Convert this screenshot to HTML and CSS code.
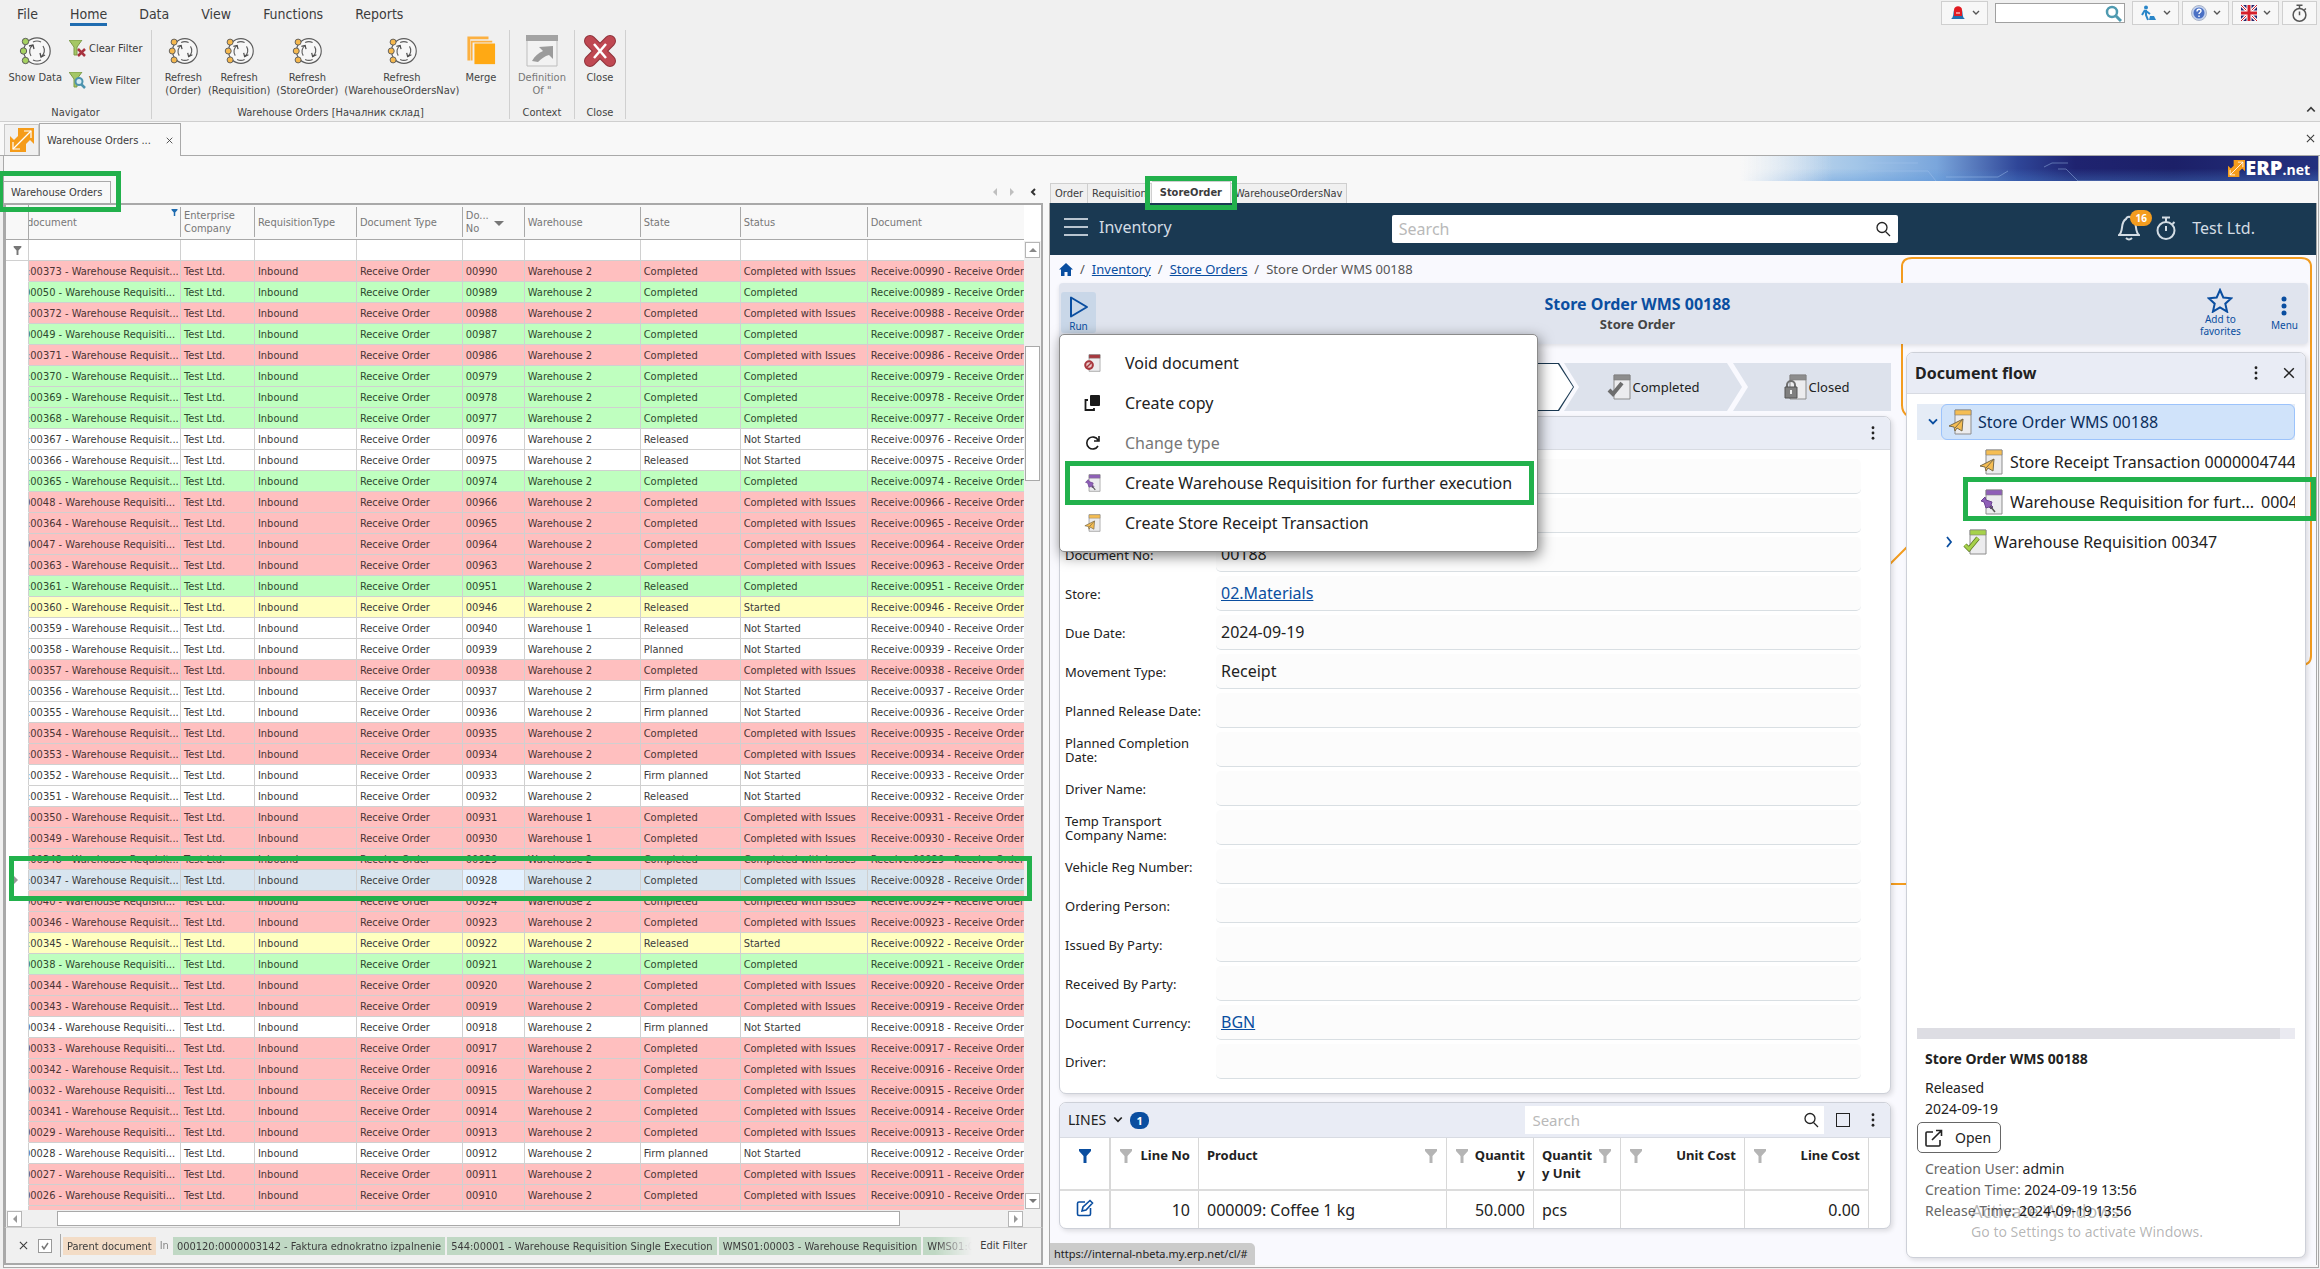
FILE: index.html
```html
<!DOCTYPE html>
<html lang="en">
<head>
<meta charset="utf-8">
<title>Warehouse Orders</title>
<link rel="stylesheet" href="styles.css">
</head>
<body>
<svg class="sprite" aria-hidden="true">
  <symbol id="refresh" viewBox="0 0 32 32">
    <circle cx="18" cy="16" r="13.2" fill="#f7f7f7" stroke="#5c5c5c" stroke-width="1.2"/>
    <path d="M12 21a8 8 0 0 1 2-11M24 11a8 8 0 0 1-2 11M14 25q4 2 8 0M14 7q4-2 8 0" fill="none" stroke="#5c5c5c" stroke-width="1.2"/>
    <path d="M10 11l4-1 1 4M26 20l-4 2-1-4" fill="none" stroke="#4c4c4c" stroke-width="1.3"/>
    <g fill="currentColor" stroke="#5c5c5c"><circle cx="6.500" cy="6.500" r="3.2"/><circle cx="4.500" cy="16" r="3.2"/><circle cx="6.500" cy="25.500" r="3.2"/></g>
  </symbol>
  <symbol id="funnel" viewBox="0 0 12 14"><path d="M0 0h12v2L7.500 7v7h-3V7L0 2z" fill="currentColor"/></symbol>
  <symbol id="caret" viewBox="0 0 8 6"><path d="M1 1l3 3 3-3" fill="none" stroke="currentColor" stroke-width="1.4"/></symbol>
  <symbol id="cross" viewBox="0 0 10 10"><path d="M1 1l8 8M9 1l-8 8" fill="none" stroke="currentColor" stroke-width="1.2"/></symbol>
  <symbol id="lens" viewBox="0 0 16 16"><circle cx="7" cy="6.500" r="5" fill="none" stroke="currentColor" stroke-width="1.3"/><path d="M10.500 10.500L15 15" stroke="currentColor" stroke-width="1.3"/></symbol>
  <symbol id="dots" viewBox="0 0 4 16"><g fill="currentColor"><circle cx="2" cy="2" r="1.6"/><circle cx="2" cy="8" r="1.6"/><circle cx="2" cy="14" r="1.6"/></g></symbol>
  <symbol id="stopwatch" viewBox="0 0 22 24"><g fill="none" stroke="currentColor" stroke-width="2"><circle cx="11" cy="14.500" r="8.500"/><path d="M7 1.500h8M11 2v4M17.500 8l2-2M11 10v5"/></g></symbol>
  <symbol id="arrows" viewBox="0 0 24 24"><path d="M8 0h16v16l-4-4-4 4v8H0V8l4 4 4-4z" fill="#f59c1a"/><path d="M3 21L21 3" stroke="#fff" stroke-width="1.200"/><path d="M14 3h7v7M3 14v7h7" fill="none" stroke="#fff" stroke-width="1.200"/></symbol>
  <symbol id="sheet" viewBox="0 0 24 26"><path d="M7 1h16v24H7z" fill="#ececee" stroke="#8d8d8d"/><path d="M7 1h16v5H7z" fill="currentColor" stroke="#7d7d7d" stroke-opacity=".6"/></symbol>
  <symbol id="doc-plane" viewBox="0 0 24 26"><use href="#sheet"/><path d="M1 17L15 10l-1 12-5-3-2 3-1-4z" fill="#f5bd52" stroke="#7a6a48"/><path d="M15 10l-8 9" stroke="#7a6a48"/></symbol>
  <symbol id="doc-pin" viewBox="0 0 24 26"><use href="#sheet"/><path d="M2 12l4-4 1 3 6 2-1 3 2 2-2 2-2-2-3 1-2-6z" fill="#8f5fb8" stroke="#6b4391"/><path d="M11 17l5 6" stroke="#555" stroke-width="1.500"/></symbol>
  <symbol id="doc-check" viewBox="0 0 24 26"><use href="#sheet"/><path d="M2 16l4 4 9-11" fill="none" stroke="#5d7626" stroke-width="4.500"/><path d="M2 16l4 4 9-11" fill="none" stroke="#a6d14b" stroke-width="3"/></symbol>
  <symbol id="doc-done" viewBox="0 0 24 26"><use href="#sheet"/><path d="M2 16l4 4 9-11" fill="none" stroke="#6d6d6d" stroke-width="4"/></symbol>
  <symbol id="doc-lock" viewBox="0 0 24 26"><use href="#sheet"/><path d="M4 14v-3a4 4 0 0 1 8 0v3" fill="none" stroke="#6f6f6f" stroke-width="2"/><path d="M2 13h12v11H2z" fill="#7f7f7f" stroke="#555"/><path d="M8 16v4" stroke="#eee" stroke-width="2"/></symbol>
  <symbol id="doc-void" viewBox="0 0 24 26"><use href="#sheet"/><circle cx="7" cy="16" r="5.500" fill="#e9c9c9" stroke="#a8373d" stroke-width="3"/><path d="M3 20l8-8" stroke="#a8373d" stroke-width="2"/></symbol>
</svg>

<header class="ribbon">
  <div class="ribbon-top">
    <nav class="ribbon-tabs">
      <button>File</button><button class="is-active">Home</button><button>Data</button><button>View</button><button>Functions</button><button>Reports</button>
    </nav>
    <div class="quick">
      <button class="quick-btn" aria-label="Alerts"><svg width="16" height="16" viewBox="0 0 16 16"><path d="M1 14c3-2 2-6 3-9h8c1 3 0 7 3 9z" fill="#1f6fb0"/><path d="M4 11V5c0-5 8-5 8 0v6z" fill="#e11b22"/><path d="M6 8h4" stroke="#fff"/></svg><svg width="8" height="6"><use href="#caret"/></svg></button>
      <label class="quick-search"><input type="text" aria-label="Quick search"><svg width="17" height="17" viewBox="0 0 17 17"><circle cx="7" cy="7" r="5" fill="none" stroke="#4f9ab0" stroke-width="2.500"/><path d="M11 11l5 5" stroke="#4f9ab0" stroke-width="3"/></svg></label>
      <button class="quick-btn" aria-label="Tasks"><svg width="16" height="16" viewBox="0 0 16 16"><circle cx="5" cy="2.500" r="2" fill="#2a86c8"/><path d="M4 5l-3 5M5 5v5l2 5M5 6l4 3" stroke="#2a86c8" stroke-width="2" fill="none"/><path d="M8 15l1-4 4 0 2 4z" fill="#2a86c8"/></svg><svg width="8" height="6"><use href="#caret"/></svg></button>
      <button class="quick-btn" aria-label="Help"><svg width="16" height="16" viewBox="0 0 16 16"><circle cx="8" cy="8" r="7.500" fill="#c3d2ee" stroke="#aab4c8"/><circle cx="8" cy="8" r="5.500" fill="#4a70c4"/><path d="M6 6.500c0-3 4-3 4-.5 0 1.500-2 1.500-2 3M8 10.500v1.500" fill="none" stroke="#fff" stroke-width="1.400"/></svg><svg width="8" height="6"><use href="#caret"/></svg></button>
      <button class="quick-btn" aria-label="Language"><svg width="16" height="16" viewBox="0 0 16 16"><path d="M0 0h16v16H0z" fill="#26246b"/><path d="M0 0l16 16M16 0L0 16" stroke="#fff" stroke-width="3"/><path d="M0 0l16 16M16 0L0 16" stroke="#d6202b"/><path d="M8 0v16M0 8h16" stroke="#fff" stroke-width="5"/><path d="M8 0v16M0 8h16" stroke="#d6202b" stroke-width="3"/></svg><svg width="8" height="6"><use href="#caret"/></svg></button>
      <button class="quick-btn" aria-label="Timer"><svg width="17" height="18"><use href="#stopwatch"/></svg></button>
    </div>
  </div>
  <div class="ribbon-body">
    <section class="group group-nav">
      <div class="group-items">
        <button class="tool green"><svg width="32" height="32"><use href="#refresh"/></svg>Show Data</button>
        <div class="mini-tools">
          <button class="mini"><svg width="17" height="17" viewBox="0 0 17 17"><path d="M0 0h13L8 7v8l-3 0V7z" fill="#a5c765" stroke="#7c9a49"/><path d="M9 9l7 7M16 9l-7 7" stroke="#a8323e" stroke-width="2.500"/></svg>Clear Filter</button>
          <button class="mini"><svg width="17" height="17" viewBox="0 0 17 17"><path d="M0 0h13L8 7v8l-3 0V7z" fill="#a5c765" stroke="#7c9a49"/><circle cx="10" cy="9.500" r="3.500" fill="#d7ecf5" stroke="#4c93ae" stroke-width="2"/><path d="M12 12l4 4" stroke="#4c93ae" stroke-width="2.500"/></svg>View Filter</button>
        </div>
      </div>
      <h2>Navigator</h2>
    </section>
    <section class="group group-orders">
      <div class="group-items">
        <button class="tool"><svg width="30" height="32"><use href="#refresh"/></svg>Refresh<br>(Order)</button>
        <button class="tool"><svg width="30" height="32"><use href="#refresh"/></svg>Refresh<br>(Requisition)</button>
        <button class="tool"><svg width="30" height="32"><use href="#refresh"/></svg>Refresh<br>(StoreOrder)</button>
        <button class="tool"><svg width="30" height="32"><use href="#refresh"/></svg>Refresh<br>(WarehouseOrdersNav)</button>
        <button class="tool"><svg width="30" height="32" viewBox="0 0 32 32"><path d="M3 26V2h21" fill="none" stroke="#fcb040" stroke-width="3"/><path d="M6 26V6h22" fill="none" stroke="#fcb040" stroke-width="2"/><path d="M9 8h22v22H9z" fill="#ffa914"/></svg>Merge</button>
      </div>
      <h2>Warehouse Orders [Началник склад]</h2>
    </section>
    <section class="group">
      <div class="group-items">
        <button class="tool is-disabled"><svg width="32" height="32" viewBox="0 0 32 32"><path d="M1 1h30v30H1z" fill="#f2f2f2" stroke="#bdbdbd"/><path d="M0 0h32v6H0z" fill="#a3a3a3"/><path d="M27 11v13l-4-4c-4 1-8 4-11 7l-6-1c3-5 6-8 11-10l-4-4z" fill="#9b9b9b"/></svg>Definition<br>Of "</button>
      </div>
      <h2>Context</h2>
    </section>
    <section class="group group-close">
      <div class="group-items">
        <button class="tool"><svg width="32" height="32" viewBox="0 0 32 32"><path d="M6 6l20 20M26 6L6 26" stroke="#8e3038" stroke-width="12" stroke-linecap="round"/><path d="M6 6l20 20M26 6L6 26" stroke="#bf4852" stroke-width="10" stroke-linecap="round"/><path d="M10 9l12 14M22 9L10 23" stroke="#fff" stroke-width="2.500"/></svg>Close</button>
      </div>
      <h2>Close</h2>
    </section>
    <button class="collapse" aria-label="Collapse ribbon"><svg width="10" height="8"><use href="#caret"/></svg></button>
  </div>
</header>

<div class="docbar">
  <button class="home-tab" aria-label="Start"><svg width="24" height="24"><use href="#arrows"/></svg></button>
  <div class="doc-tab">Warehouse Orders ...<button aria-label="Close tab"><svg width="7" height="7"><use href="#cross"/></svg></button></div>
  <button class="close-all" aria-label="Close"><svg width="9" height="9"><use href="#cross"/></svg></button>
</div>

<main class="workspace">
  <div class="banner">
    <svg width="320" height="24" viewBox="0 0 320 24" fill="none" stroke="#a4c4ee" stroke-opacity=".45"><path d="M0 6h50M0 14h60l8 10M78 20h52l10-6M176 10l8-4h16M190 12h8l12 12h32"/></svg>
    <svg width="17" height="17"><use href="#arrows"/></svg><strong>ERP<small>.net</small></strong>
  </div>
  <div class="panes">
    <section class="pane">
      <div class="pane-tabs">
        <button class="pane-tab is-active mark mark-tab">Warehouse Orders</button>
        <span class="pane-nav"><i class="tri tri-left"></i><i class="tri tri-right"></i><svg width="6" height="8" viewBox="0 0 6 8"><path d="M5 1L2 4l3 3" fill="none" stroke="#333" stroke-width="2"/></svg></span>
      </div>
      <div class="grid-frame">
        <table class="orders">
          <colgroup><col class="c-ind"><col class="c-parent"><col class="c-comp"><col class="c-req"><col class="c-type"><col class="c-no"><col class="c-wh"><col class="c-state"><col class="c-status"><col></colgroup>
          <thead>
            <tr><th></th><th class="cut"><svg class="filtered" width="7" height="7"><use href="#funnel"/></svg>document</th><th>Enterprise<br>Company</th><th>RequisitionType</th><th>Document Type</th><th class="sorted">Do...<br>No</th><th>Warehouse</th><th>State</th><th>Status</th><th>Document</th></tr>
            <tr class="filter-row"><td><svg width="9" height="9"><use href="#funnel"/></svg></td><td></td><td></td><td></td><td></td><td></td><td></td><td></td><td></td><td></td></tr>
          </thead>
          <tbody id="orders"></tbody>
        </table>
        <div class="vscroll"><span class="sb-btn"><i class="tri tri-up"></i></span><span class="sb-thumb"></span><span class="sb-btn"><i class="tri tri-down"></i></span></div>
      </div>
      <div class="hscroll"><span class="sb-btn"><i class="tri tri-left"></i></span><span class="sb-thumb"></span><span class="sb-btn"><i class="tri tri-right"></i></span></div>
      <div class="filterbar">
        <button aria-label="Clear filter"><svg width="9" height="9"><use href="#cross"/></svg></button>
        <input type="checkbox" checked aria-label="Filter enabled">
        <div class="chips"><span class="chip field">Parent document</span><span class="op">In</span><span class="chip">000120:0000003142 - Faktura ednokratno izpalnenie</span><span class="chip">544:00001 - Warehouse Requisition Single Execution</span><span class="chip">WMS01:00003 - Warehouse Requisition</span><span class="chip">WMS01:00</span></div>
        <button>Edit Filter</button>
      </div>
    </section>

    <section class="pane-web">
      <div class="pane-tabs"><button class="web-tab">Order</button><button class="web-tab">Requisition</button><button class="web-tab is-active mark mark-web">StoreOrder</button><button class="web-tab">WarehouseOrdersNav</button></div>
      <div class="web">
        <svg class="trace" width="432" height="640" viewBox="0 0 432 640" fill="none" stroke="#f39c1f" stroke-width="2" aria-hidden="true"><path d="M18 151V12Q18 3 28 3H417Q427 3 427 12V401Q427 410 417 410M18 150Q18 158 24 161M4 311L24 291M4 629H24"/></svg>
        <header class="topbar">
          <div class="brand"><button aria-label="Menu"><svg width="24" height="18" viewBox="0 0 24 18"><path d="M0 1h24M0 9h24M0 17h24" stroke="#b9c5d0" stroke-width="2"/></svg></button>Inventory</div>
          <label class="top-search"><input type="search" placeholder="Search" aria-label="Search"><svg width="16" height="16"><use href="#lens"/></svg></label>
          <div class="account">
            <button class="bell" aria-label="Notifications"><svg width="22" height="26" viewBox="0 0 22 26"><path d="M1 20c5-4 1-13 7-16 1-3 5-3 6 0 6 3 2 12 7 16z" fill="none" stroke="currentColor" stroke-width="2"/><path d="M8 23q3 3 6 0" fill="none" stroke="currentColor" stroke-width="2"/></svg><span class="count">16</span></button>
            <button aria-label="Timer"><svg width="22" height="24"><use href="#stopwatch"/></svg></button>
            <span>Test Ltd.</span>
          </div>
        </header>
        <nav class="crumbs"><a href="#" aria-label="Home"><svg width="14" height="13" viewBox="0 0 14 13"><path d="M7 0l7 6.500h-2V13H8.500V9h-3v4H2V6.500H0z" fill="#0a4ea0"/></svg></a><span>/</span><a href="#">Inventory</a><span>/</span><a href="#">Store Orders</a><span>/</span><span>Store Order WMS 00188</span></nav>
        <div class="toolbar">
          <div class="run-wrap">
            <button class="run"><svg width="20" height="22" viewBox="0 0 20 22"><path d="M2 1.500v19L18 11z" fill="none" stroke="#0a4ea0" stroke-width="2" stroke-linejoin="round"/></svg>Run</button>
            <div class="menu">
              <button><svg width="17" height="18"><use href="#doc-void" color="#a8373d"/></svg>Void document</button>
              <button><svg width="17" height="18" viewBox="0 0 17 18"><rect x="6" y="1" width="10" height="11" rx="1" fill="#1a1a1a"/><path d="M4 6H1.500v10H10v-2" fill="none" stroke="#1a1a1a" stroke-width="1.800"/></svg>Create copy</button>
              <button disabled><svg width="17" height="18" viewBox="0 0 17 18"><path d="M14 6A6 6 0 1 0 14 12M15 2v5h-5" fill="none" stroke="#1a1a1a" stroke-width="1.600"/></svg>Change type</button>
              <button class="mark mark-menu"><svg width="17" height="18"><use href="#doc-pin" color="#8f5fb8"/></svg>Create Warehouse Requisition for further execution</button>
              <button><svg width="17" height="18"><use href="#doc-plane" color="#f5bd52"/></svg>Create Store Receipt Transaction</button>
            </div>
          </div>
          <div class="title"><h1>Store Order WMS 00188</h1><p>Store Order</p></div>
          <div class="actions">
            <button><svg width="26" height="25" viewBox="0 0 26 25"><path d="M13 2l3.300 7.500 8 .8-6 5.400 1.800 8L13 19.500l-7.100 4.200 1.800-8-6-5.400 8-.8z" fill="none" stroke="#0a4ea0" stroke-width="2"/></svg>Add to<br>favorites</button>
            <button><svg width="6" height="20" viewBox="0 0 6 20"><g fill="#0a4ea0"><circle cx="3" cy="3" r="2.500"/><circle cx="3" cy="10" r="2.500"/><circle cx="3" cy="17" r="2.500"/></g></svg>Menu</button>
          </div>
        </div>
        <div class="content">
          <div class="record">
            <ol class="status">
              <li class="now"></li>
              <li><svg width="24" height="26"><use href="#doc-done" color="#8d8d8d"/></svg>Completed</li>
              <li><svg width="24" height="26"><use href="#doc-lock" color="#8d8d8d"/></svg>Closed</li>
            </ol>
            <section class="card">
              <header class="card-head"><button class="more" aria-label="More"><svg width="4" height="14"><use href="#dots"/></svg></button></header>
              <div class="form">
                <div class="row"><span></span><span class="box"></span></div>
                <div class="row"><span></span><span class="box"></span></div>
                <div class="row"><label for="f-no">Document No:</label><input id="f-no" value="00188"></div>
                <div class="row"><span>Store:</span><span class="box"><a href="#">02.Materials</a></span></div>
                <div class="row"><label for="f-due">Due Date:</label><input id="f-due" value="2024-09-19"></div>
                <div class="row"><label for="f-mov">Movement Type:</label><input id="f-mov" value="Receipt"></div>
                <div class="row"><label for="f-prd">Planned Release Date:</label><input id="f-prd"></div>
                <div class="row"><label for="f-pcd">Planned Completion Date:</label><input id="f-pcd"></div>
                <div class="row"><label for="f-drn">Driver Name:</label><input id="f-drn"></div>
                <div class="row"><label for="f-ttc">Temp Transport Company Name:</label><input id="f-ttc"></div>
                <div class="row"><label for="f-vrn">Vehicle Reg Number:</label><input id="f-vrn"></div>
                <div class="row"><label for="f-ord">Ordering Person:</label><input id="f-ord"></div>
                <div class="row"><label for="f-iss">Issued By Party:</label><input id="f-iss"></div>
                <div class="row"><label for="f-rec">Received By Party:</label><input id="f-rec"></div>
                <div class="row"><span>Document Currency:</span><span class="box"><a href="#">BGN</a></span></div>
                <div class="row"><label for="f-dri">Driver:</label><input id="f-dri"></div>
              </div>
            </section>
            <section class="card">
              <header class="card-head lines-head">
                <h2>LINES</h2><svg width="10" height="8"><use href="#caret"/></svg><span class="badge">1</span>
                <label class="line-search"><input type="search" placeholder="Search" aria-label="Search lines"><svg width="16" height="16"><use href="#lens"/></svg></label>
                <input type="checkbox" aria-label="Select lines">
                <button class="more" aria-label="More"><svg width="4" height="14"><use href="#dots"/></svg></button>
              </header>
              <table class="lines">
                <colgroup><col class="l-edit"><col class="l-no"><col><col class="l-qty"><col class="l-qty"><col class="l-cost"><col class="l-cost"><col class="l-end"></colgroup>
                <thead><tr>
                  <th class="mid"><svg class="on" width="16" height="14"><use href="#funnel"/></svg></th>
                  <th><div><svg width="14" height="14"><use href="#funnel"/></svg><span>Line No</span></div></th>
                  <th><div><span>Product</span><svg width="14" height="14"><use href="#funnel"/></svg></div></th>
                  <th class="num"><div><svg width="14" height="14"><use href="#funnel"/></svg><span>Quantit<br>y</span></div></th>
                  <th><div><span>Quantit<br>y Unit</span><svg width="14" height="14"><use href="#funnel"/></svg></div></th>
                  <th><div><svg width="14" height="14"><use href="#funnel"/></svg><span>Unit Cost</span></div></th>
                  <th><div><svg width="14" height="14"><use href="#funnel"/></svg><span>Line Cost</span></div></th>
                  <th class="end"></th>
                </tr></thead>
                <tbody><tr>
                  <td class="mid"><button aria-label="Edit line"><svg width="18" height="18" viewBox="0 0 18 18"><path d="M9 3H3q-1.500 0-1.500 1.500V15q0 1.500 1.500 1.500h10q1.500 0 1.500-1.500V9M6 12l1-4 7-6.500 2.500 2.500L10 11z" fill="none" stroke="#0a4ea0" stroke-width="1.600"/></svg></button></td>
                  <td class="num">10</td><td>000009: Coffee 1 kg</td><td class="num">50.000</td><td>pcs</td><td></td><td class="num">0.00</td><td class="end"></td>
                </tr></tbody>
              </table>
            </section>
          </div>
          <aside class="card flow">
            <header class="card-head"><h2>Document flow</h2><button class="more" aria-label="More"><svg width="4" height="14"><use href="#dots"/></svg></button><button aria-label="Close panel"><svg width="12" height="12"><use href="#cross"/></svg></button></header>
            <ul class="tree">
              <li class="node is-open"><svg class="chev" width="12" height="8"><use href="#caret"/></svg><span class="node-label"><svg width="24" height="26"><use href="#doc-plane" color="#f5bd52"/></svg>Store Order WMS 00188</span></li>
              <li class="node deep"><svg width="24" height="26"><use href="#doc-plane" color="#f5bd52"/></svg><span class="clip">Store Receipt Transaction 0000004744</span></li>
              <li class="node deep mark mark-node"><svg width="24" height="26"><use href="#doc-pin" color="#8f5fb8"/></svg><span class="clip">Warehouse Requisition for furt...<span class="doc-no">0004</span></span></li>
              <li class="node sub"><svg class="chev" width="8" height="12" viewBox="0 0 8 12"><path d="M2 1l4 5-4 5" fill="none" stroke="#0a4ea0" stroke-width="1.800"/></svg><svg width="24" height="26"><use href="#doc-check" color="#a6d14b"/></svg><span>Warehouse Requisition 00347</span></li>
            </ul>
            <div class="flow-scroll"><span></span></div>
            <div class="details">
              <h3>Store Order WMS 00188</h3>
              <p>Released</p><p>2024-09-19</p>
              <button class="open"><svg width="18" height="18" viewBox="0 0 18 18"><path d="M8 3H2q-1 0-1 1v12q0 1 1 1h12q1 0 1-1v-5M7 11l9-9M11 1.500h5.500V7" fill="none" stroke="#222" stroke-width="1.600"/></svg>Open</button>
              <dl><div><dt>Creation User: </dt><dd>admin</dd></div><div><dt>Creation Time: </dt><dd>2024-09-19 13:56</dd></div><div><dt>Release Time: </dt><dd>2024-09-19 13:56</dd></div></dl>
            </div>
            <div class="watermark"><b>Activate Windows</b><span>Go to Settings to activate Windows.</span></div>
          </aside>
        </div>
        <div class="link-hint">https://internal-nbeta.my.erp.net/cl/#</div>
      </div>
    </section>
  </div>
</main>
<script src="app.js"></script>
</body>
</html>
```
FILE: styles.css
```css
* { box-sizing: border-box; }
html, body { height: 100%; margin: 0; }
body {
  display: flex; flex-direction: column; min-height: 100vh; overflow: hidden;
  background: #f0f0f0; color: #3c3c3c;
  font: 11px/13px "DejaVu Sans Condensed", "DejaVu Sans", Tahoma, sans-serif;
}
h1, h2, h3, p, ul, ol, dl, dd { margin: 0; padding: 0; font: inherit; }
ul, ol { list-style: none; }
button, input { font: inherit; color: inherit; margin: 0; padding: 0; border: 0; background: none; }
input { outline: 0; min-width: 0; }
input[type="search"] { appearance: none; }
svg { flex: none; display: block; }
.sprite { position: absolute; width: 0; height: 0; }

/* highlight frames drawn over the marked controls */
.mark { position: relative; }
.mark::after { content: ""; position: absolute; z-index: 5; border: 5px solid #22b14c; pointer-events: none; }
.mark-tab::after { inset: -11px -11px -9px -6px; }
.mark-web::after { inset: -6px -7px -7px -7px; }
.mark-menu::after { inset: -2px 3px -2px 5px; }
.mark-node::after { inset: -7px -21px -1px 46px; }
.mark-row::after { inset: -14px -8px -10px 3px; }

/* ribbon */
.ribbon { border-bottom: 1px solid #cfcfcf; }
.ribbon-top { display: flex; justify-content: space-between; height: 29px; padding: 0 3px 0 1px; }
.ribbon-tabs { display: flex; gap: 32px; padding: 6px 0 0 16px; font-size: 14px; line-height: 17px; }
.ribbon-tabs button { height: 20px; border-bottom: 3px solid transparent; }
.ribbon-tabs .is-active { border-color: #1f6cb0; }
.quick { display: flex; gap: 3px; padding-top: 1px; }
.quick-btn { display: flex; align-items: center; justify-content: center; gap: 6px; width: 47px; height: 24px; border: 1px solid #cfcfcf; background: #f7f7f7; color: #555; }
.quick-btn:last-child { width: 35px; }
.quick-search { display: flex; align-items: center; width: 130px; height: 20px; margin: 2px 4px; border: 1px solid #a0a0a0; background: #fff; }
.quick-search input { flex: 1; }
.quick-search svg { margin-right: 2px; }
.ribbon-body { display: flex; position: relative; height: 92px; padding-top: 1px; }
.group { display: flex; flex-direction: column; justify-content: space-between; padding: 5px 8px 0; border-right: 1px solid #d0d0d0; margin-bottom: 2px; text-align: center; }
.group h2 { color: #444; }
.group-items { display: flex; justify-content: center; gap: 7px; }
.group-nav { width: 152px; }
.group-orders { width: 358px; }
.group-orders .group-items { gap: 6px; margin: 0 -4px; }
.group-close { width: 51px; }
.tool { display: flex; flex-direction: column; align-items: center; line-height: 13px; color: #444; }
.tool svg { margin-bottom: 4px; color: #f5b84e; }
.tool.green svg { color: #a5d160; }
.tool.is-disabled { color: #777; }
.mini-tools { display: flex; flex-direction: column; gap: 15px; padding-top: 5px; }
.mini { display: flex; align-items: center; gap: 3px; white-space: nowrap; }
.collapse { position: absolute; right: 4px; bottom: 8px; transform: rotate(180deg); }

.docbar { display: flex; align-items: flex-end; height: 34px; padding-left: 4px; background: #f8f8f8; border-bottom: 1px solid #a9a9a9; }
.home-tab { display: flex; align-items: center; justify-content: center; width: 35px; height: 31px; border: 1px solid #c8c8c8; border-bottom: 0; background: #f0f0f0; }
.doc-tab { display: flex; justify-content: space-between; align-items: center; width: 142px; height: 33px; margin-bottom: -1px; padding: 0 7px; border: 1px solid #a9a9a9; border-bottom: 0; background: #f8f8f8; }
.close-all { margin: 0 5px 12px auto; }

.workspace { flex: 1; min-height: 0; display: flex; flex-direction: column; margin: 0 1px 1px 3px; padding-bottom: 2px; border: solid #a9a9a9; border-width: 0 1px 1px 1px; background: #f8f8f8; }
.banner { display: flex; align-items: center; justify-content: flex-end; width: 25%; height: 25px; margin-left: auto; padding-right: 8px; background: linear-gradient(90deg, #f8f8f8 0, transparent 16%), linear-gradient(180deg, transparent 50%, #4f8fd855), linear-gradient(90deg, #d5e3f0 0, #a3c6e8 20%, #7aa6dc 34%, #2f4698 48%, #1f2370 58%, #1c2068 75%, #23307e); color: #fff; }
.banner svg:first-child { margin-right: 40px; }
.banner strong { font: 800 20px/24px "Open Sans", sans-serif; }
.banner small { font-size: 14px; font-weight: 700; }
.panes { flex: 1; min-height: 0; display: grid; grid-template-columns: minmax(0, 1039fr) minmax(0, 1270fr); gap: 5px; }
.pane, .pane-web { display: flex; flex-direction: column; min-width: 0; min-height: 0; }
.pane-tabs { display: flex; align-items: flex-end; height: 22px; }
.pane-tab { height: 22px; width: 107px; padding: 0 7px; border: 1px solid #a9a9a9; border-left: 0; border-bottom: 0; white-space: nowrap; text-align: left; }
.pane-nav { display: flex; align-items: center; gap: 13px; margin: 0 7px 7px auto; }
.tri { width: 0; height: 0; border: 4px solid transparent; }
.tri-left { border-right-color: #999; border-left: 0; }
.tri-right { border-left-color: #999; border-right: 0; }
.tri-up { border-bottom-color: #888; border-top: 0; }
.tri-down { border-top-color: #777; border-bottom: 0; }
.pane-nav .tri { opacity: .6; }
.pane-nav svg { margin-left: 3px; }

/* orders grid */
.grid-frame { flex: 1; min-height: 0; display: flex; overflow: hidden; border: solid #a9a9a9; border-width: 2px 2px 0; background: #fff; position: relative; }
.orders { flex: 1; align-self: flex-start; min-width: 0; table-layout: fixed; border-spacing: 0; }
.c-ind { width: 23px; } .c-parent { width: 152px; } .c-comp { width: 74px; } .c-req { width: 102px; } .c-type { width: 106px; }
.c-no { width: 62px; } .c-wh { width: 116px; } .c-state { width: 100px; } .c-status { width: 127px; }
.orders th, .orders td { padding: 0 0 0 3px; border: solid #d0d0d0; border-width: 0 1px 1px 0; text-align: left; white-space: nowrap; overflow: hidden; }
.orders th { position: relative; height: 35px; background: linear-gradient(#a9a9a9, #a9a9a9) right 50%/1px 30px no-repeat #f8f8f8; border-right: 0; border-bottom-color: #a9a9a9; font-weight: 400; color: #777; }
.orders th:last-child, .orders th:first-child { background: #f8f8f8; }
.orders th:first-child { border-right: 1px solid #a9a9a9; }
.orders tr > :last-child { border-right: 0; }
.orders td { height: 21px; }
.orders td:nth-child(2), .orders .cut { padding-left: 0; text-indent: -2px; }
.orders td.short { text-indent: -5px; }
.orders tbody td:first-child { background: #fff; border-bottom-color: #fff; padding-left: 8px; }
.filter-row td:first-child { color: #777; padding-left: 7px; }
.filtered { position: absolute; right: 3px; top: 4px; color: #1f6cb0; }
.sorted::after { content: ""; position: absolute; right: 21px; top: 16px; border: 5px solid transparent; border-top-color: #777; border-bottom: 0; }
.issues { background: #ffbfbf; color: #4c3434; }
.done { background: #bfffbf; color: #2e4a2e; }
.started { background: #ffffbf; }
.selected { background: #d8e5ef; }
.selected td:nth-child(6) { background: #e4f1ff; }
.vscroll { flex: none; display: flex; flex-direction: column; width: 17px; margin-top: 36px; background: #f0f0f0; align-items: center; padding: 1px 0; }
.sb-btn { display: flex; flex: none; align-items: center; justify-content: center; width: 15px; height: 16px; border: 1px solid #b5b5b5; background: #fff; }
.sb-thumb { border: 1px solid #a9a9a9; background: #fff; }
.vscroll .sb-thumb { width: 15px; height: 14%; margin: 88px 0 auto; }
.hscroll { display: flex; align-items: center; height: 17px; padding: 0 18px 0 1px; border: solid #a9a9a9; border-width: 0 2px; background: #f0f0f0; }
.hscroll .sb-thumb { width: 83%; height: 15px; margin: 0 auto 0 35px; }
.hscroll .sb-thumb { flex: none; }
.filterbar { display: flex; align-items: center; height: 38px; padding: 0 14px 0 13px; border: solid #a9a9a9; border-width: 1px 2px 2px; border-top-color: #d0d0d0; background: #f0f0f0; gap: 8px; white-space: nowrap; }
.filterbar input { appearance: none; width: 14px; height: 14px; margin-left: 2px; border: 1px solid #999; background: #fff; }
.filterbar input:checked { background: #fff url("data:image/svg+xml,%3Csvg xmlns='http://www.w3.org/2000/svg' viewBox='0 0 12 12'%3E%3Cpath d='M3 6l2 3 4-6' fill='none' stroke='%23777' stroke-width='1.5'/%3E%3C/svg%3E") center/12px no-repeat; }
.chips { flex: 1; display: flex; align-items: center; gap: 2px; min-width: 0; overflow: hidden; padding-left: 2px; border-left: 1px solid #a9a9a9; mask-image: linear-gradient(90deg, #000 96%, transparent); height: 23px; }
.chip { flex: none; padding: 3px 4px 2px; background: #c0d8c4; }
.chip.field { background: #f3dcc6; }
.op { padding: 0 2px; color: #888; }

/* web client */
.web-tab { height: 20px; padding: 0 4px; border: 1px solid #cfcfcf; border-left-width: 0; background: #f0f0f0; border-bottom: 0; }
.web-tab:first-child { margin-left: 2px; border-left-width: 1px; }
.web-tab.is-active { height: 22px; padding: 0 8px; background: #fff; font-weight: 700; }
.web { position: relative; flex: 1; min-height: 0; display: flex; flex-direction: column; margin: 0 1px 0 1px; border: solid #a9a9a9; border-width: 0 1px; background: #f9f9fe; color: #222; font: 13px/18px "Noto Sans", "Open Sans", sans-serif; overflow: hidden; }
.trace { position: absolute; right: 0; top: 52px; }
.topbar { display: grid; grid-template-columns: 27% 40% 1fr; align-items: center; height: 52px; background: #1a3952; color: #d3dce4; font-size: 16px; z-index: 1; }
.brand { display: flex; align-items: center; gap: 11px; padding: 0 0 4px 14px; }
.top-search { display: flex; align-items: center; height: 28px; padding: 0 7px; border-radius: 2px; background: #fff; color: #222; }
.top-search input { flex: 1; }
::placeholder { color: #b9b9b9; opacity: 1; }
.account { display: flex; align-items: center; justify-content: flex-end; gap: 15px; padding: 0 61px 2px 0; }
.bell { position: relative; }
.count { position: absolute; left: 12px; top: -5px; min-width: 22px; padding: 0 4px; border-radius: 8px; background: #f39c1f; color: #fff; font: 700 10px/16px "Noto Sans", sans-serif; text-align: center; }
.crumbs { display: flex; align-items: center; gap: 7px; height: 28px; padding-left: 9px; color: #555; }
a { color: #0a4ea0; }
.toolbar { position: relative; z-index: 3; display: flex; justify-content: space-between; height: 61px; margin: 0 8px 0 9px; padding: 0 10px 0 2px; background: #e0e4ee; border-radius: 4px; box-shadow: 0 2px 4px #0000001a; color: #0a4ea0; }
.run-wrap { position: relative; padding-top: 9px; }
.run { display: flex; flex-direction: column; align-items: center; width: 35px; height: 41px; padding-top: 4px; border-radius: 3px; background: #c9d7e8; font-size: 10px; line-height: 14px; }
.run svg { margin-bottom: 1px; }
.menu { position: absolute; left: -2px; top: 51px; width: max-content; padding: 8px 0; border: 1px solid #8b8b8b; border-radius: 5px; background: #fff; box-shadow: 2px 4px 14px #00000080; color: #222; font-size: 16px; }
.menu button { display: flex; align-items: center; gap: 24px; width: 100%; height: 40px; padding: 0 25px 0 24px; }
.menu button:disabled { color: #777; }
.title { flex: 1; padding-top: 9px; text-align: center; }
.title h1 { font-weight: 700; font-size: 16px; line-height: 24px; }
.title p { font-weight: 700; line-height: 16px; color: #444; }
.actions { display: flex; gap: 30px; padding-left: 21px; font-size: 10px; line-height: 12px; }
.actions button { display: flex; flex-direction: column; align-items: center; padding-top: 5px; }
.actions button + button { padding-top: 13px; gap: 3px; }
.content { flex: 1; min-height: 0; position: relative; display: grid; grid-template-columns: minmax(0, 1fr) 400px; gap: 15px; padding: 0 10px 7px 9px; }
.record { padding-top: 19px; }
.status { display: grid; grid-template-columns: 515fr 168fr 149fr; height: 48px; margin-bottom: 5px; }
.status li { display: flex; align-items: center; justify-content: center; gap: 2px; margin-left: -10px; background: #dde2ec; clip-path: polygon(0 0, calc(100% - 15px) 0, 100% 50%, calc(100% - 15px) 100%, 0 100%, 15px 50%); }
.status li:last-child { margin-left: -9px; padding-left: 8px; clip-path: polygon(0 0, 100% 0, 100% 100%, 0 100%, 15px 50%); }
.status .now { margin-left: 0; padding: 1px; background: #1a3952; clip-path: polygon(0 0, calc(100% - 15px) 0, 100% 50%, calc(100% - 15px) 100%, 0 100%); }
.now::before { content: ""; flex: 1; height: 100%; background: #fff; clip-path: polygon(0 0, calc(100% - 15px) 0, 100% 50%, calc(100% - 15px) 100%, 0 100%); }
.card { border: 1px solid #cdd0d8; border-radius: 7px; background: #fff; box-shadow: 2px 2px 5px #0000001f; }
.card + .card { margin-top: 8px; }
.card-head { display: flex; align-items: center; height: 33px; padding: 0 15px; background: #e9ecf5; border-bottom: 1px solid #d8dbe2; border-radius: 6px 6px 0 0; }
.more { display: flex; margin-left: auto; }
.form { display: grid; gap: 4px; padding: 9px 29px 14px 5px; }
.row { display: grid; grid-template-columns: 151px minmax(0, 1fr); align-items: center; }
.row > :first-child { max-width: 142px; line-height: 14px; }
.row input, .box { height: 35px; padding: 0 5px; border-bottom: 1px solid #d9dfe3; border-radius: 5px; background: #fcfcfc; font-size: 16px; line-height: 34px; }
.lines-head { height: 35px; padding: 0 15px 0 8px; gap: 7px; }
.lines-head h2 { font-size: 14px; }
.badge { width: 19px; border-radius: 8px; background: #0a4ea0; color: #fff; font: 700 11px/17px "Noto Sans", sans-serif; text-align: center; }
.line-search { display: flex; align-items: center; width: 37%; height: 28px; margin-left: auto; padding: 0 5px 0 7px; background: #fff; }
.line-search input { flex: 1; font-size: 15px; }
.lines-head input[type="checkbox"] { appearance: none; width: 14px; height: 14px; margin: 0 14px 0 5px; border: 1px solid #222; }
.lines-head .more { margin: 0; }
.lines { width: 100%; table-layout: fixed; border-spacing: 0; }
.l-edit { width: 51px; } .l-no { width: 88px; } .l-qty { width: 87px; } .l-cost { width: 124px; } .l-end { width: 21px; }
.lines th, .lines td { padding: 0 8px; border-right: 1px solid #d8d8d8; text-align: left; }
.lines th { height: 53px; border-bottom: 2px solid #dcdcdc; vertical-align: top; padding: 8px 8px 0; }
.lines th div { display: flex; justify-content: space-between; }
.lines th svg { color: #b5b5b5; margin-top: 3px; }
.lines th svg.on { color: #0a4ea0; margin: 3px auto; }
.lines td { height: 37px; font-size: 16px; }
.lines .num { text-align: right; }
.lines .mid { text-align: center; border-right-width: 2px; }
.lines .end { border: 0; }
.flow { position: relative; display: flex; flex-direction: column; margin-top: 8px; }
.flow .card-head { height: 41px; padding: 0 10px 0 8px; gap: 25px; }
.flow h2 { font-weight: 700; font-size: 16px; }
.tree { flex: 1; padding: 10px 10px 0; font-size: 16px; }
.node { display: flex; align-items: center; gap: 7px; height: 36px; margin-bottom: 4px; white-space: nowrap; }
.node .chev { margin-left: 10px; color: #0a4ea0; }
.node.is-open { gap: 2px; background: #e5ecf6; }
.node-label { flex: 1; display: flex; align-items: center; gap: 6px; height: 36px; padding-left: 6px; border: 1px solid #9cc3fb; border-radius: 6px; background: #d0e3fa; color: #0c2f5c; }
.node.deep { padding-left: 62px; }
.clip { flex: 1; overflow: hidden; }
.doc-no { margin-left: 7px; }
.node.sub { padding-left: 18px; }
.node.sub .chev { margin-right: 3px; }
.flow-scroll { height: 11px; margin: 0 10px; padding-right: 15px; background: #eaeaf1; }
.flow-scroll span { display: block; height: 100%; background: #dddde3; }
.details { height: 179px; margin-bottom: 39px; padding: 9px 18px 0; overflow: hidden; font-size: 14px; line-height: 21px; }
.details h3 { font-weight: 700; margin-bottom: 8px; }
.open { display: flex; align-items: center; gap: 12px; height: 31px; margin: 3px 0 5px -8px; padding: 0 9px 0 7px; border: 1px solid #666; border-radius: 5px; }
dt, dd { display: inline; }
dt { color: #666; }
.watermark { position: absolute; right: 102px; bottom: 16px; color: #0000004d; font-size: 14px; }
.watermark b { display: block; font-size: 18px; font-weight: 400; line-height: 24px; }
.link-hint { position: absolute; left: 0; bottom: 0; padding: 2px 7px 2px 4px; border-radius: 0 5px 0 0; background: #cbcbcb; font-size: 11px; }
```
FILE: app.js
```js
// Kinds: i = completed with issues, c = completed, n = not started, s = started
const rows = [
  ['00373', '00990', 'i'], ['0050', '00989', 'c'], ['00372', '00988', 'i'], ['0049', '00987', 'c'],
  ['00371', '00986', 'i'], ['00370', '00979', 'c'], ['00369', '00978', 'c'], ['00368', '00977', 'c'],
  ['00367', '00976', 'n', 'Released'], ['00366', '00975', 'n', 'Released'], ['00365', '00974', 'c'],
  ['0048', '00966', 'i'], ['00364', '00965', 'i'], ['0047', '00964', 'i'], ['00363', '00963', 'i'],
  ['00361', '00951', 'c', 'Released'], ['00360', '00946', 's', 'Released'],
  ['00359', '00940', 'n', 'Released', 1], ['00358', '00939', 'n', 'Planned'], ['00357', '00938', 'i'],
  ['00356', '00937', 'n', 'Firm planned'], ['00355', '00936', 'n', 'Firm planned'],
  ['00354', '00935', 'i'], ['00353', '00934', 'i'], ['00352', '00933', 'n', 'Firm planned'],
  ['00351', '00932', 'n', 'Released'], ['00350', '00931', 'i', 'Completed', 1],
  ['00349', '00930', 'i', 'Completed', 1], ['00348', '00929', 'i'], ['00347', '00928', 'i'],
  ['0040', '00924', 'i'], ['00346', '00923', 'i'], ['00345', '00922', 's', 'Released'],
  ['0038', '00921', 'c'], ['00344', '00920', 'i'], ['00343', '00919', 'i'],
  ['0034', '00918', 'n', 'Firm planned'], ['0033', '00917', 'i'], ['00342', '00916', 'i'],
  ['0032', '00915', 'i'], ['00341', '00914', 'i'], ['0029', '00913', 'i'],
  ['0028', '00912', 'n', 'Firm planned'], ['0027', '00911', 'i'], ['0026', '00910', 'i']
];
const kinds = {
  i: ['issues', 'Completed with Issues'], c: ['done', 'Completed'],
  n: ['', 'Not Started'], s: ['started', 'Started']
};
const selectedNo = '00928';

const html = rows.map(([parent, no, kind, state = 'Completed', wh = 2]) => {
  const [cls, status] = kinds[kind];
  const short = parent.length === 4;
  const current = no === selectedNo;
  const name = short ? `0${parent} - Warehouse Requisiti...` : `:${parent} - Warehouse Requisit...`;
  return `<tr class="${current ? 'selected mark mark-row' : cls}">
    <td>${current ? '<i class="tri tri-right" style="display:block"></i>' : ''}</td>
    <td class="${short ? 'short' : ''}">${name}</td><td>Test Ltd.</td><td>Inbound</td><td>Receive Order</td>
    <td>${no}</td><td>Warehouse ${wh}</td><td>${state}</td><td>${status}</td>
    <td>Receive:${no} - Receive Order</td></tr>`;
}).join('');
document.getElementById('orders').innerHTML = html + '<tr class="issues">' + '<td></td>'.repeat(10) + '</tr>';
```
